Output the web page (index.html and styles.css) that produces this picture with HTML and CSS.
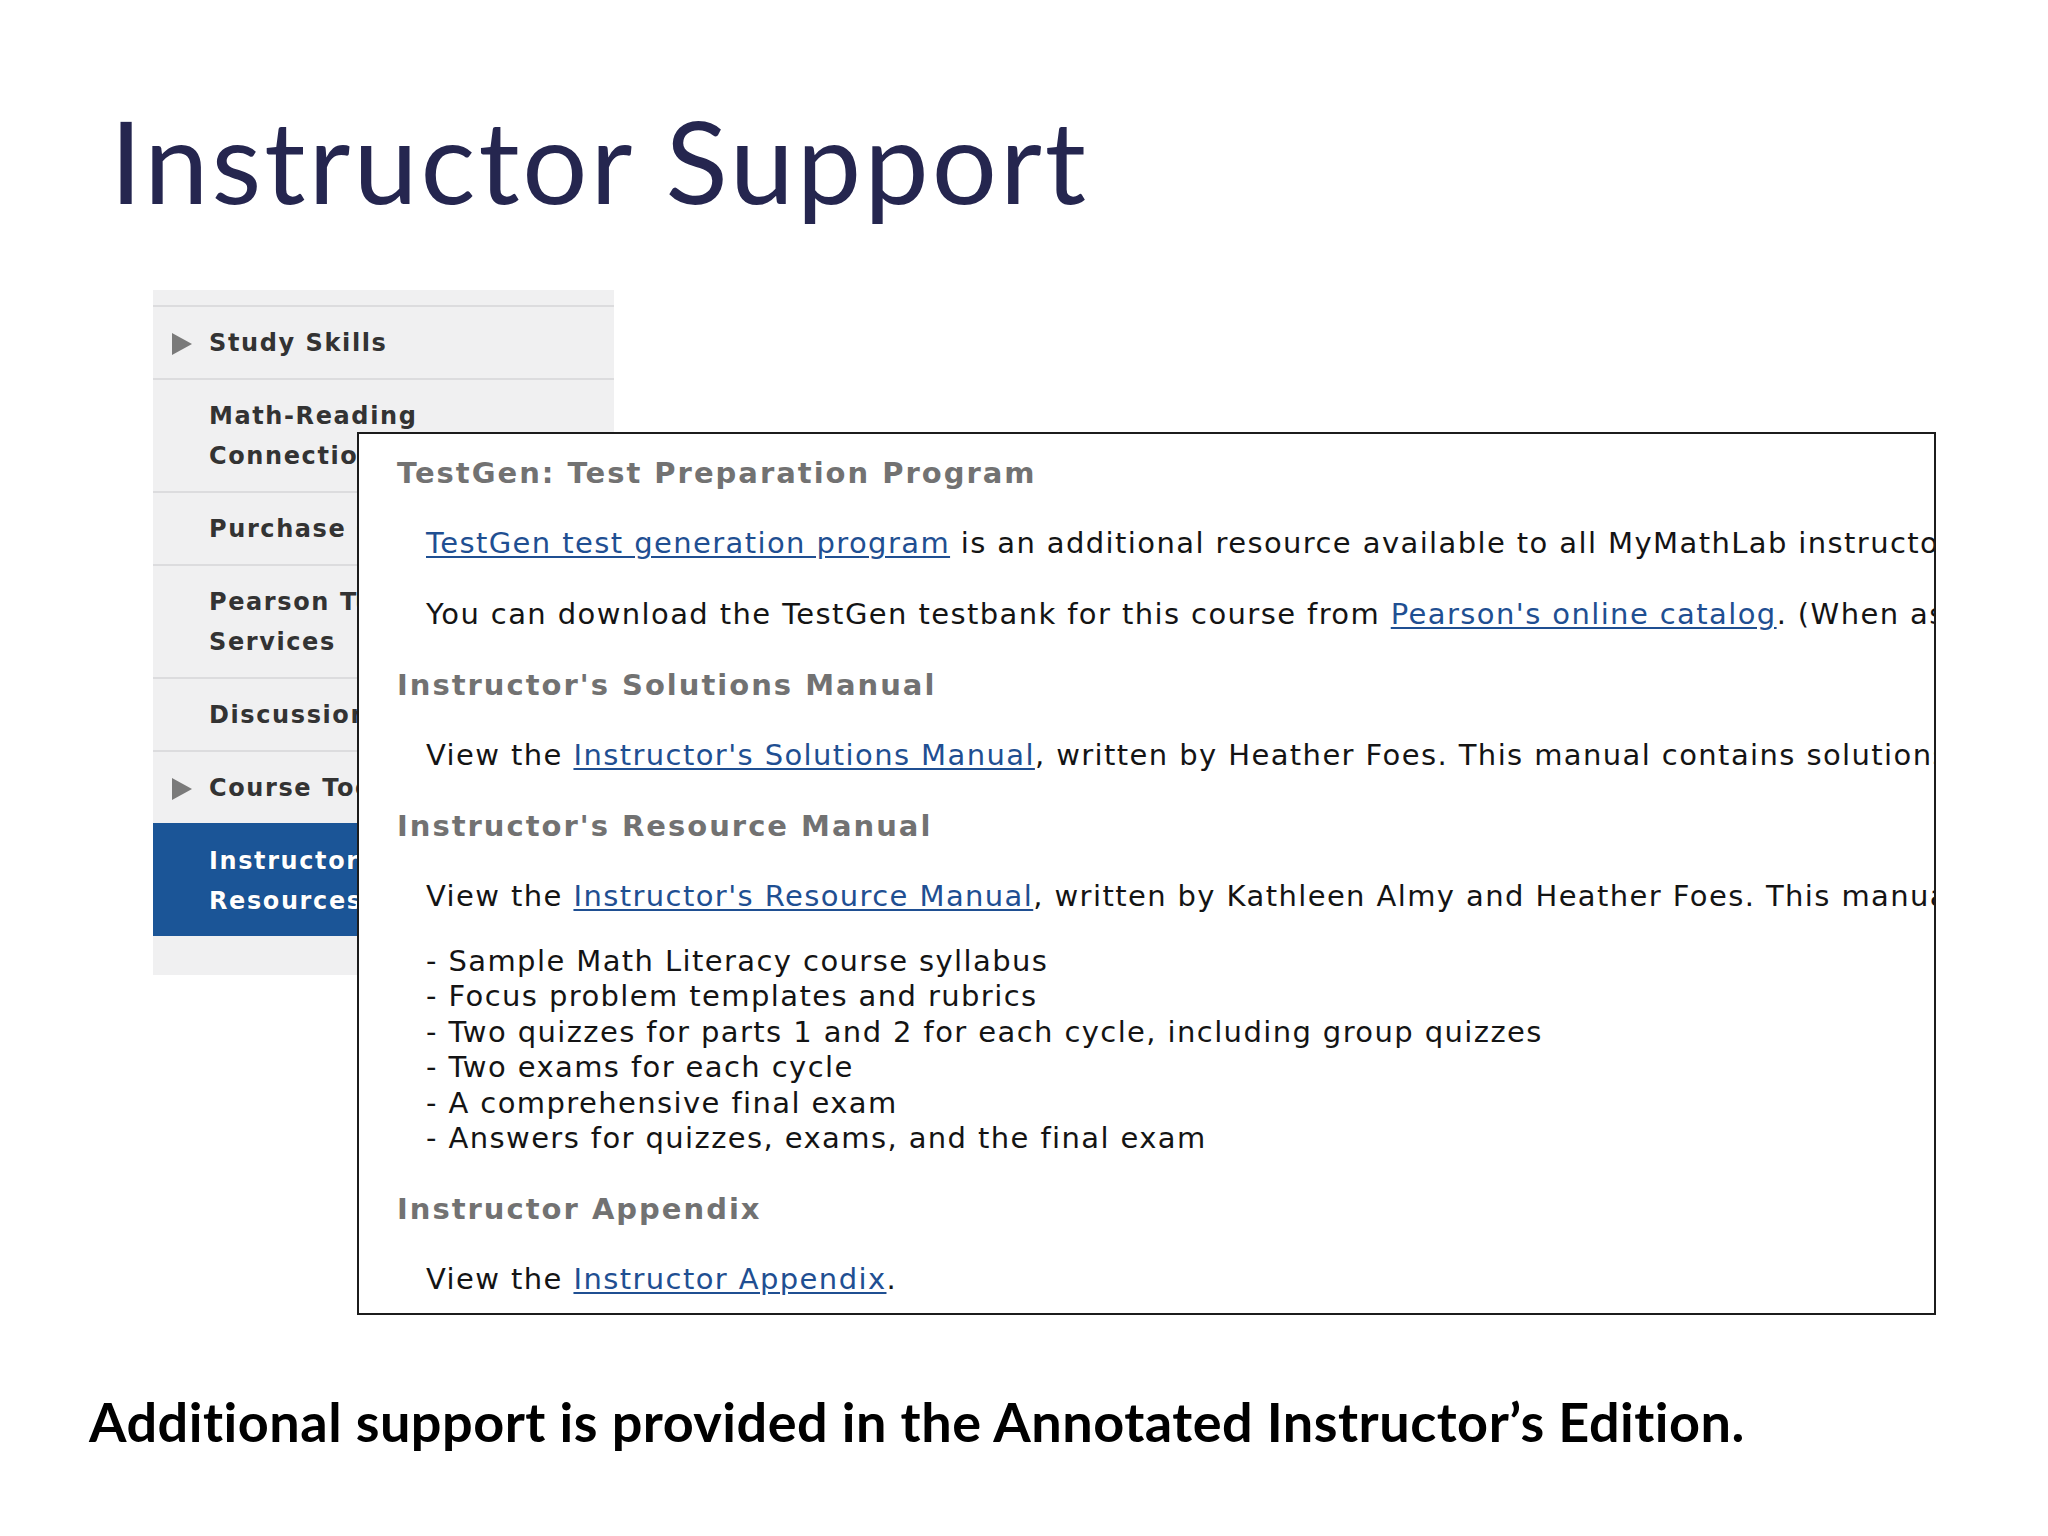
FILE: index.html
```html
<!DOCTYPE html>
<html lang="en">
<head>
<meta charset="utf-8">
<title>Instructor Support</title>
<link rel="stylesheet" href="styles.css">
</head>
<body>
<div class="slide">
  <h1 class="title">Instructor Support</h1>
  <div class="stage">
    <nav class="sidebar">
      <div class="nav-item has-arrow"><span class="arrow"></span>Study Skills</div>
      <div class="nav-item">Math-Reading<br>Connections</div>
      <div class="nav-item">Purchase Options</div>
      <div class="nav-item">Pearson Tutor<br>Services</div>
      <div class="nav-item">Discussion Questions</div>
      <div class="nav-item has-arrow"><span class="arrow"></span>Course Tools</div>
      <div class="nav-item active">Instructor<br>Resources</div>
      <div class="nav-foot"></div>
    </nav>
    <div class="popup">
      <h2 class="pop-head">TestGen: Test Preparation Program</h2>
      <p class="pop-text"><a href="#">TestGen test generation program</a> is an additional resource available to all MyMathLab instructors for creating tests and quizzes.</p>
      <p class="pop-text">You can download the TestGen testbank for this course from <a href="#">Pearson's online catalog</a>. (When asked, log in with your instructor credentials.)</p>
      <h2 class="pop-head">Instructor's Solutions Manual</h2>
      <p class="pop-text">View the <a href="#">Instructor's Solutions Manual</a>, written by Heather Foes. This manual contains solutions to all exercises.</p>
      <h2 class="pop-head">Instructor's Resource Manual</h2>
      <p class="pop-text">View the <a href="#">Instructor's Resource Manual</a>, written by Kathleen Almy and Heather Foes. This manual includes:</p>
      <p class="pop-list">- Sample Math Literacy course syllabus<br>- Focus problem templates and rubrics<br>- Two quizzes for parts 1 and 2 for each cycle, including group quizzes<br>- Two exams for each cycle<br>- A comprehensive final exam<br>- Answers for quizzes, exams, and the final exam</p>
      <h2 class="pop-head">Instructor Appendix</h2>
      <p class="pop-text">View the <a href="#">Instructor Appendix</a>.</p>
    </div>
  </div>
  <p class="caption">Additional support is provided in the Annotated Instructor’s Edition.</p>
</div>
</body>
</html>
```

FILE: styles.css
```css
html, body {
  margin: 0;
  padding: 0;
  background: #ffffff;
}

.slide {
  width: 2048px;
  height: 1536px;
  position: relative;
  overflow: hidden;
}

.title {
  margin: 0;
  padding: 94px 0 0 110px;
  font-family: Lato, "Open Sans", sans-serif;
  font-weight: 400;
  font-size: 115px;
  letter-spacing: 3px;
  line-height: 130px;
  color: #25264f;
  height: 194px;
  box-sizing: border-box;
}

.stage {
  position: relative;
  height: 1025px;
  margin-top: 96px;
}

.sidebar {
  width: 461px;
  margin-left: 153px;
  background: #f0f0f1;
  padding-top: 15px;
  font-family: "DejaVu Sans", Verdana, sans-serif;
  font-weight: 700;
  font-size: 24px;
  letter-spacing: 1.6px;
  line-height: 40px;
  color: #333333;
}

.nav-item {
  position: relative;
  border-top: 2px solid #dcdcde;
  padding: 16px 10px 15px 56px;
  white-space: nowrap;
}

.nav-item.active {
  background: #1b5597;
  color: #ffffff;
  border-top-color: #1b5597;
  text-shadow: 0 0 1px #0b2d5a;
}

.arrow {
  position: absolute;
  left: 19px;
  top: 26px;
  width: 0;
  height: 0;
  border-top: 11px solid transparent;
  border-bottom: 11px solid transparent;
  border-left: 20px solid #7a7a7a;
}

.nav-foot {
  height: 39px;
}

.popup {
  position: absolute;
  left: 357px;
  top: 142px;
  width: 1579px;
  height: 883px;
  box-sizing: border-box;
  border: 2px solid #1c1c1c;
  background: #ffffff;
  overflow: hidden;
  padding: 21px 0 0 38px;
  font-family: "DejaVu Sans", Verdana, Tahoma, sans-serif;
  font-size: 29px;
  letter-spacing: 1.4px;
  line-height: 36px;
  color: #141414;
  white-space: nowrap;
}

.pop-head {
  margin: 0 0 34px 0;
  font-size: 29px;
  letter-spacing: 2px;
  line-height: 36px;
  font-weight: 700;
  color: #727272;
}

.pop-text {
  margin: 0 0 35px 29px;
}

.pop-list {
  margin: -5px 0 35px 29px;
  line-height: 35.4px;
}

.pop-text a {
  color: #1f4f92;
  text-decoration: underline;
  text-underline-offset: 3px;
}

.caption {
  margin: 0;
  padding: 75px 0 0 89px;
  font-family: Lato, "Open Sans", sans-serif;
  font-weight: 700;
  font-size: 54px;
  letter-spacing: 0.5px;
  line-height: 64px;
  color: #000000;
}
```
